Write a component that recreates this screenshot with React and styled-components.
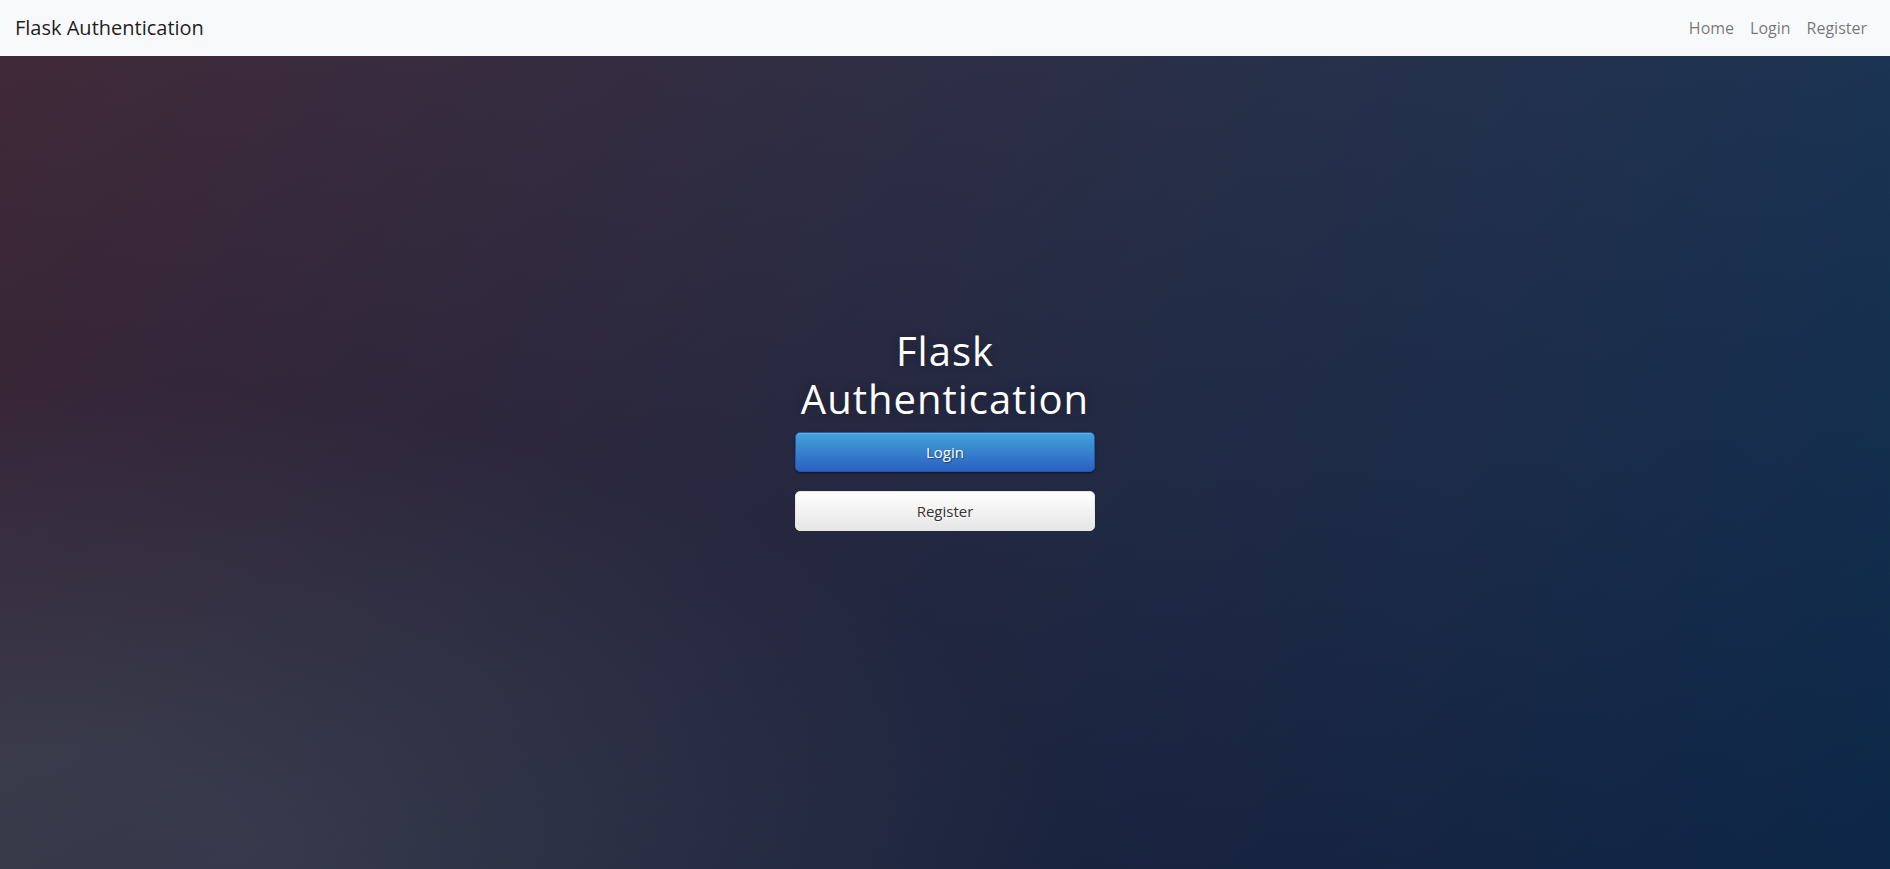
import React from 'react';
import styled, { createGlobalStyle } from 'styled-components';

const GlobalStyle = createGlobalStyle`
  * { box-sizing: border-box; }
  html, body {
    margin: 0;
    padding: 0;
    height: 100%;
  }
  body {
    font-family: 'Open Sans', 'Liberation Sans', sans-serif;
    font-size: 16px;
    line-height: 1.5;
    background: #092756;
  }
`

// page background: diagonal red -> navy, with a cool wash from the top,
// a grey glow in the bottom left and a dark veil over it all
const Page = styled.div`
  min-height: 100vh;
  display: flex;
  flex-direction: column;
  background:
    linear-gradient(rgba(0,14,30,.28), rgba(0,14,30,.28)),
    radial-gradient(ellipse farthest-corner at 0% 100%, rgba(104,128,138,.4) 10%, rgba(138,114,76,0) 40%),
    linear-gradient(to bottom, rgba(57,173,219,.25) 0%, rgba(42,60,87,.4) 100%),
    linear-gradient(135deg, #670d10 0%, #022858 100%);
`

const Navbar = styled.nav`
  background-color: #f8f9fa;
  padding: 8px 15px;
  display: flex;
  align-items: center;
  justify-content: space-between;
`

const Brand = styled.a`
  color: rgba(0,0,0,.9);
  font-size: 20px;
  line-height: 30px;
  padding: 5px 0;
  text-decoration: none;
`

const NavList = styled.ul`
  display: flex;
  list-style: none;
  margin: 0;
  padding: 0;
`

const NavLink = styled.a`
  display: block;
  padding: 8px;
  color: rgba(0,0,0,.55);
  text-decoration: none;
  font-size: 16px;
  line-height: 24px;
`

const Main = styled.main`
  flex: 1;
  display: flex;
  justify-content: center;
  padding-top: 271px;
`

const Login = styled.div`
  width: 300px;
`

const Title = styled.h1`
  margin: 0 0 9px;
  color: #fff;
  font-size: 40px;
  font-weight: 500;
  line-height: 48px;
  letter-spacing: 1px;
  text-align: center;
  text-shadow: 0 0 10px rgba(0,0,0,.3);
`

const Button = styled.a`
  display: block;
  width: 100%;
  padding: 9px 14px;
  margin-bottom: ${p => p.$gap || 0}px;
  font-size: 15px;
  line-height: 20px;
  text-align: center;
  text-decoration: none;
  border-radius: 5px;
  cursor: pointer;
  color: ${p => p.$primary ? '#fff' : '#333'};
  background-color: ${p => p.$primary ? '#2f6cc6' : '#f5f5f5'};
  background-image: ${p => p.$primary
    ? 'linear-gradient(to bottom, #44a3d7, #2a60c2)'
    : 'linear-gradient(to bottom, #ffffff, #e6e6e6)'};
  border: 1px solid ${p => p.$primary ? '#2456b3' : '#e6e6e6'};
  text-shadow: ${p => p.$primary
    ? '1px 1px 1px rgba(0,0,0,0.4)'
    : '0 1px 1px rgba(255,255,255,0.75)'};
  box-shadow: inset 0 1px 0 rgba(255,255,255,.2), 0 1px 2px rgba(0,0,0,${p => p.$primary ? '.5' : '.05'});
`

const App = () => {
  return (
    <Page>
      <GlobalStyle />
      <Navbar>
        <Brand href="#">Flask Authentication</Brand>
        <NavList>
          <li><NavLink href="#">Home</NavLink></li>
          <li><NavLink href="#">Login</NavLink></li>
          <li><NavLink href="#">Register</NavLink></li>
        </NavList>
      </Navbar>
      <Main>
        <Login>
          <Title>Flask Authentication</Title>
          <Button $primary $gap={19} href="#">Login</Button>
          <Button href="#">Register</Button>
        </Login>
      </Main>
    </Page>
  );
}

export default App;
